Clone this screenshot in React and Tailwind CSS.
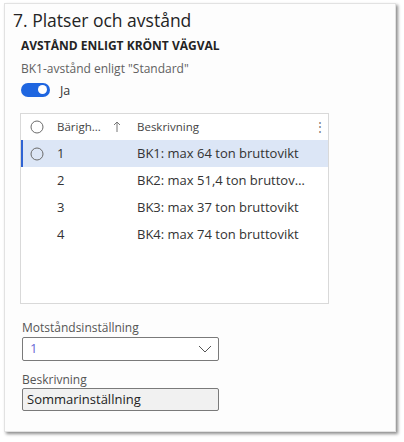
import React from "react";

const font = { fontFamily: '"Open Sans", "Noto Sans", sans-serif' };

function Circle() {
  return (
    <svg width="14" height="14" viewBox="0 0 14 14" className="shrink-0">
      <circle cx="7" cy="7" r="6" fill="none" stroke="#6b6b6b" strokeWidth="1" />
    </svg>
  );
}

function Row({ n, text, selected }) {
  return (
    <div
      className={`flex h-[27px] items-center ${selected ? "bg-[#dce6f6] border-l-2 border-[#2f63d3]" : "border-l-2 border-transparent"}`}
    >
      <div className="w-[27px] flex justify-center pl-[1px]">{selected ? <Circle /> : null}</div>
      <div className="w-[87px] pl-[7px] text-[13px] text-[#333]">{n}</div>
      <div className="w-[168px] truncate text-[13px] text-[#333]">{text}</div>
    </div>
  );
}

export default function App() {
  return (
    <div className="w-[404px] h-[442px] bg-white pt-[3px] pl-[4px]" style={font}>
      <div className="w-[392px] h-[429px] bg-[#fdfdfd] border border-[#e2e2e2] shadow-[2px_2px_3px_rgba(0,0,0,0.45)] flex flex-col">
        <div className="pl-[8px] pt-[3px] text-[17.5px] leading-[26px] text-[#242424]">7. Platser och avstånd</div>
        <div className="pl-[16px] pt-[5px] text-[12px] leading-[16px] font-bold text-[#242424]">AVSTÅND ENLIGT KRÖNT VÄGVAL</div>
        <div className="pl-[16px] pt-[7px] text-[12px] leading-[16px] text-[#616161]">BK1-avstånd enligt "Standard"</div>
        <div className="pl-[16px] pt-[5px] flex items-center gap-[10px] h-[20px]">
          <div className="w-[29px] h-[14px] rounded-full bg-[#1f66e0] flex items-center justify-end pr-[3px]">
            <div className="w-[9px] h-[9px] rounded-full bg-white" />
          </div>
          <span className="text-[12.5px] text-[#333] pt-[3px]">Ja</span>
        </div>
        <div className="ml-[15px] mt-[16px] w-[309px] h-[191px] border border-[#d9d9d9] bg-white">
          <div className="flex h-[26px] items-center border-l-2 border-transparent">
            <div className="w-[27px] flex justify-center pl-[1px]"><Circle /></div>
            <div className="w-[87px] pl-[7px] flex items-center text-[11.5px] text-[#444]">
              <span>Bärigh...</span>
              <svg width="8" height="12" viewBox="0 0 8 12" className="ml-[12px]">
                <path d="M4 11 V1 M1 4 L4 1 L7 4" fill="none" stroke="#777" strokeWidth="1" />
              </svg>
            </div>
            <div className="flex-1 text-[11.5px] text-[#444]">Beskrivning</div>
            <div className="w-[14px] text-[#777] text-[12px] leading-none">⋮</div>
          </div>
          <Row n="1" text="BK1: max 64 ton bruttovikt" selected />
          <Row n="2" text="BK2: max 51,4 ton bruttovikt" />
          <Row n="3" text="BK3: max 37 ton bruttovikt" />
          <Row n="4" text="BK4: max 74 ton bruttovikt" />
        </div>
        <div className="pl-[17px] pt-[15px] text-[12px] leading-[17px] text-[#555]">Motståndsinställning</div>
        <div className="ml-[17px] mt-[1px] w-[197px] h-[24px] border border-[#7a7a7a] rounded-[2px] bg-white flex items-center justify-between pl-[7px] pr-[6px]">
          <span className="text-[13px] text-[#6a6ad6]">1</span>
          <svg width="14" height="8" viewBox="0 0 14 8"><path d="M1 1 L7 7 L13 1" fill="none" stroke="#555" strokeWidth="1" /></svg>
        </div>
        <div className="pl-[17px] pt-[10px] text-[12px] leading-[17px] text-[#555]">Beskrivning</div>
        <div className="ml-[17px] mt-0 w-[197px] h-[23px] border border-[#7a7a7a] rounded-[2px] bg-[#f1f1f1] flex items-center pl-[4px]">
          <span className="text-[13px] text-[#222]">Sommarinställning</span>
        </div>
      </div>
    </div>
  );
}
